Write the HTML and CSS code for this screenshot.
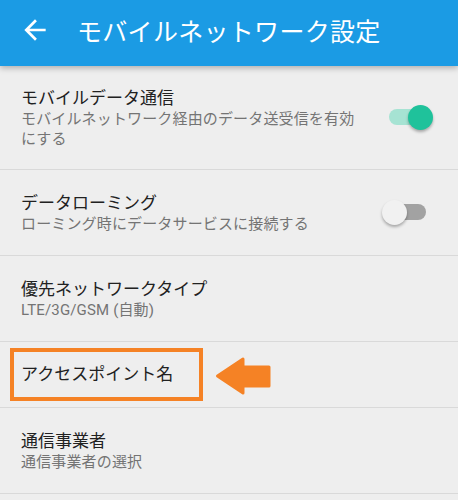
FILE: index.html
```html
<!DOCTYPE html>
<html lang="ja">
<head>
<meta charset="utf-8">
<link rel="stylesheet" href="styles.css">
</head>
<body>
<header class="appbar">
  <svg class="back" viewBox="0 0 24 24" width="32" height="32"><path d="M20 11H7.83l5.59-5.59L12 4l-8 8 8 8 1.41-1.41L7.83 13H20v-2z" fill="#fff"/></svg>
  <h1 class="appbar-title">モバイルネットワーク設定</h1>
</header>
<main class="list">
  <div class="item item-first">
    <div class="texts">
      <div class="title">モバイルデータ通信</div>
      <div class="sub">モバイルネットワーク経由のデータ送受信を有効<br>にする</div>
    </div>
    <div class="switch on"><span class="track"></span><span class="thumb"></span></div>
  </div>
  <div class="item">
    <div class="texts">
      <div class="title">データローミング</div>
      <div class="sub">ローミング時にデータサービスに接続する</div>
    </div>
    <div class="switch off"><span class="track"></span><span class="thumb"></span></div>
  </div>
  <div class="item">
    <div class="texts">
      <div class="title">優先ネットワークタイプ</div>
      <div class="sub">LTE/3G/GSM (自動)</div>
    </div>
  </div>
  <div class="item item-apn">
    <div class="title highlight">アクセスポイント名</div>
    <svg class="pointer" viewBox="0 0 56 38" width="56" height="38"><path d="M2.5 19 L28 2 L28 10 L54 10 L54 29 L28 29 L28 36 Z" fill="#f58225" stroke="#f58225" stroke-width="3" stroke-linejoin="round"/></svg>
  </div>
  <div class="item">
    <div class="texts">
      <div class="title">通信事業者</div>
      <div class="sub">通信事業者の選択</div>
    </div>
  </div>
</main>
</body>
</html>
```
FILE: styles.css
```css
html, body {
  margin: 0;
  padding: 0;
}
body {
  background: #eeeeee;
  font-family: Roboto, "Noto Sans CJK JP", sans-serif;
  width: 458px;
  height: 500px;
  overflow: hidden;
}
.appbar {
  height: 66px;
  background: #1b9be4;
  display: flex;
  align-items: center;
  box-sizing: border-box;
  padding: 0 0 6px 19px;
  box-shadow: 0 2px 6px rgba(0, 0, 0, 0.28);
  position: relative;
  z-index: 1;
}
.back {
  display: block;
  flex: none;
}
.appbar-title {
  margin: 0 0 0 26px;
  font-size: 25px;
  font-weight: 400;
  color: #ffffff;
  letter-spacing: 0.3px;
}
.list {
  display: flex;
  flex-direction: column;
}
.item {
  display: flex;
  align-items: center;
  height: 85px;
  padding: 0 25px 0 21px;
  border-bottom: 1px solid #d9d9d9;
}
.item-first {
  height: 103px;
}
.item-apn {
  height: 65px;
  padding-left: 10px;
}
.texts {
  flex: 1;
}
.title {
  font-size: 17px;
  line-height: 22px;
  color: #212121;
}
.sub {
  font-size: 15px;
  line-height: 20px;
  color: #747474;
  letter-spacing: 0.15px;
}
.highlight {
  border: 4px solid #f58225;
  padding: 11px 23px 12px 7px;
  width: 155px;
  white-space: nowrap;
}
.pointer {
  display: block;
  margin-left: 12px;
  margin-top: 2px;
}
.switch {
  position: relative;
  width: 51px;
  height: 25px;
  flex: none;
}
.switch .track {
  position: absolute;
  left: 7px;
  right: 7px;
  top: 4px;
  height: 16px;
  border-radius: 8px;
}
.switch .thumb {
  position: absolute;
  top: 0;
  width: 25px;
  height: 25px;
  border-radius: 50%;
  box-shadow: 0 2px 3px rgba(0, 0, 0, 0.3);
}
.switch.on .track {
  background: #a6e3d3;
}
.switch.on .thumb {
  right: 0;
  background: #1fc29b;
}
.switch.off .track {
  background: #a2a2a2;
}
.switch.off .thumb {
  left: 0;
  background: #f1f1f1;
}
```
